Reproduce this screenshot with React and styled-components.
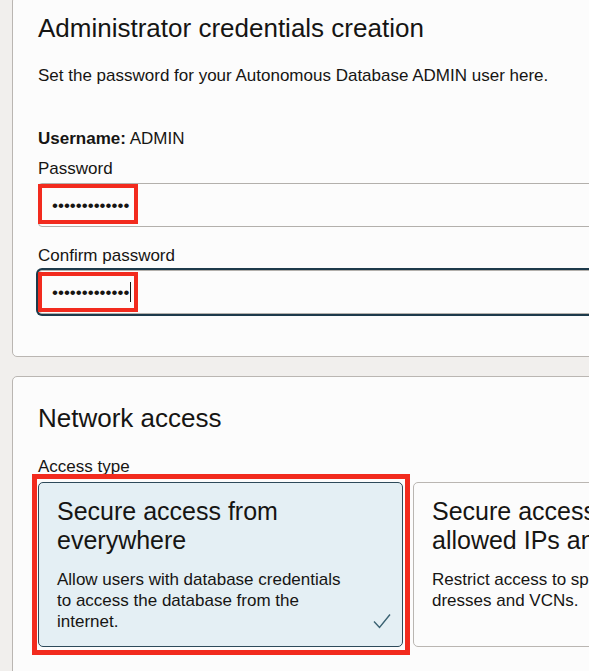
import React from 'react';
import styled, { createGlobalStyle } from 'styled-components';

const GlobalStyle = createGlobalStyle`
  html, body {
    margin: 0;
    padding: 0;
    background: #f1efed;
    overflow: hidden;
  }
  body {
    font-family: 'Liberation Sans', Arial, Helvetica, sans-serif;
    color: #161513;
  }
`;

const App = () => {
  return (
    <Page>
      <GlobalStyle />
      <Card $clipTop>
        <Title>Administrator credentials creation</Title>
        <Help>Set the password for your Autonomous Database ADMIN user here.</Help>
        <Username>
          <b>Username:</b> ADMIN
        </Username>
        <Field>
          <Label>Password</Label>
          <InputBox>
            <Dots>•••••••••••••</Dots>
            <Highlight $top={1} />
          </InputBox>
        </Field>
        <Field>
          <Label>Confirm password</Label>
          <InputBox $focused>
            <Dots>•••••••••••••</Dots>
            <Caret />
            <Highlight $top={2} />
          </InputBox>
        </Field>
      </Card>

      <Card>
        <Title>Network access</Title>
        <AccessLabel>Access type</AccessLabel>
        <Options>
          <Option $selected>
            <OptionTitle>Secure access from everywhere</OptionTitle>
            <OptionText>
              Allow users with database credentials to access the database from the internet.
            </OptionText>
            <Check viewBox='0 0 18 16' aria-hidden='true'>
              <path d='M1 8.5 L6.5 14.5 L17 1.5' fill='none' stroke='#3a6272' strokeWidth='1.4' />
            </Check>
            <OptionHighlight />
          </Option>
          <Option>
            <OptionTitle>Secure access from allowed IPs and VCNs</OptionTitle>
            <OptionText>Restrict access to specified IP ad{'\u00AD'}dresses and VCNs.</OptionText>
          </Option>
        </Options>
      </Card>
    </Page>
  );
};

export default App;

const Page = styled.div`
  display: flex;
  flex-direction: column;
  gap: 19px;
  padding-left: 12px;
  width: 760px;
`;

const Card = styled.section`
  background: #fcfcfc;
  border: 1px solid #bab6b2;
  border-radius: 5px;
  padding: ${(p) => (p.$clipTop ? '15px 25px 42px' : '25px 25px 40px')};
  margin-top: ${(p) => (p.$clipTop ? '-4px' : '0')};
  display: flex;
  flex-direction: column;
`;

const Title = styled.h2`
  margin: 0;
  font-size: 26px;
  line-height: 32px;
  font-weight: 400;
  color: #161513;
`;

const Help = styled.p`
  margin: 21px 0 0;
  font-size: 17px;
  line-height: 21px;
`;

const Username = styled.div`
  margin-top: 42px;
  font-size: 17px;
  line-height: 21px;

  b {
    font-weight: 700;
  }
`;

const Field = styled.div`
  display: flex;
  flex-direction: column;
  margin-top: 9px;

  & + & {
    margin-top: 18px;
  }
`;

const Label = styled.label`
  font-size: 17px;
  line-height: 21px;
  margin-bottom: 4px;
`;

const InputBox = styled.div`
  position: relative;
  height: 44px;
  box-sizing: border-box;
  border: 1px solid #b3b0ac;
  border-radius: 4px;
  background: #fcfcfc;
  display: flex;
  align-items: center;
  padding-left: 13px;
  box-shadow: ${(p) => (p.$focused ? '0 0 0 2px #1d3a4b' : 'none')};
`;

const Dots = styled.span`
  font-size: 17px;
  line-height: 20px;
  color: #161513;
  margin-top: 1px;
`;

const Caret = styled.span`
  display: inline-block;
  width: 1px;
  height: 20px;
  background: #161513;
  margin-left: 1px;
`;

const Highlight = styled.span`
  position: absolute;
  left: -1px;
  top: ${(p) => p.$top - 1}px;
  width: 100px;
  height: 40px;
  box-sizing: border-box;
  border: 4px solid #f22b1e;
  pointer-events: none;
`;

const AccessLabel = styled.div`
  margin-top: 22px;
  font-size: 17px;
  line-height: 21px;
`;

const Options = styled.div`
  margin-top: 5px;
  display: grid;
  grid-template-columns: 365px 366px;
  gap: 10px;
  align-items: stretch;
`;

const Option = styled.div`
  position: relative;
  box-sizing: border-box;
  height: 165px;
  padding: 14px 54px 12px 18px;
  border: 1px solid ${(p) => (p.$selected ? '#2d4a5a' : '#bab6b2')};
  border-radius: 5px;
  background: ${(p) => (p.$selected ? '#e4eff4' : '#fcfcfc')};
`;

const OptionTitle = styled.div`
  font-size: 25px;
  line-height: 29px;
  color: #161513;
`;

const OptionText = styled.div`
  margin-top: 14px;
  font-size: 17px;
  line-height: 21px;
  color: #161513;
  hyphens: manual;
`;

const Check = styled.svg`
  position: absolute;
  right: 11px;
  bottom: 17px;
  width: 18px;
  height: 16px;
`;

const OptionHighlight = styled.span`
  position: absolute;
  top: -9px;
  left: -7px;
  right: -8px;
  bottom: -9px;
  border: 5px solid #f22b1e;
  pointer-events: none;
`;
